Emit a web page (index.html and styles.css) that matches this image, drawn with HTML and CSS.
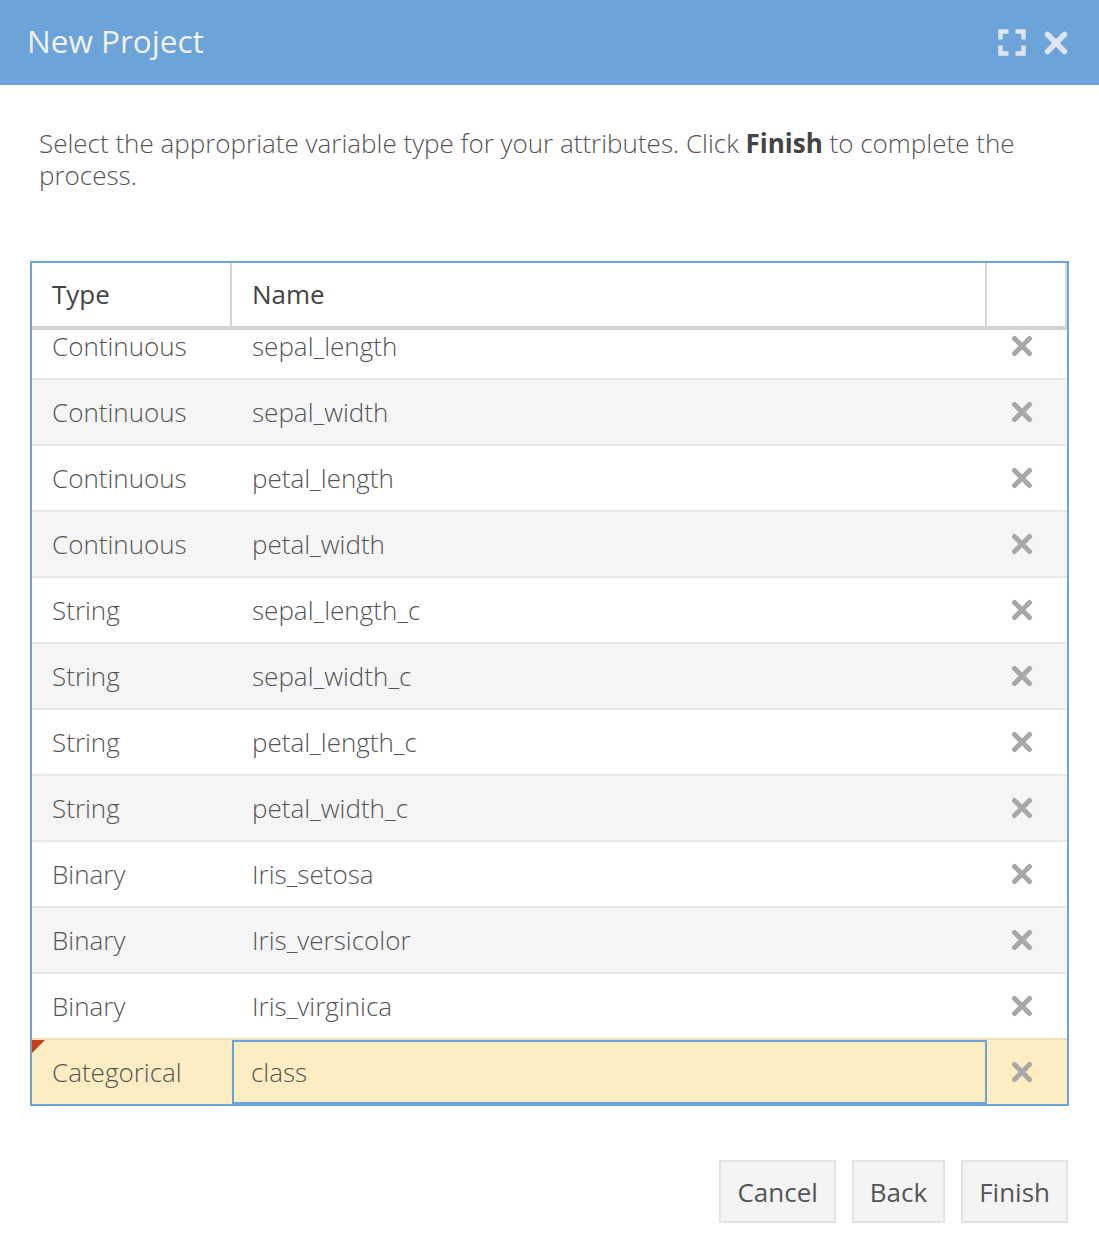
FILE: index.html
```html
<!DOCTYPE html>
<html lang="en">
<head>
<meta charset="utf-8">
<title>New Project</title>
<link rel="stylesheet" href="styles.css">
</head>
<body>
<div class="dialog">
  <header class="titlebar">
    <h1 class="title">New Project</h1>
    <div class="tools">
      <svg class="ico-expand" width="28" height="27" viewBox="0 0 28 27">
        <path d="M2.5 10.5V2.5H10.5M17.5 2.5H25.5V10.5M25.5 16.5V24.5H17.5M10.5 24.5H2.5V16.5" fill="none" stroke="#dce6f0" stroke-width="4.5"/>
      </svg>
      <svg class="ico-close" width="24" height="24" viewBox="0 0 24 24">
        <path d="M3.5 3.5L20.5 20.5M20.5 3.5L3.5 20.5" fill="none" stroke="#dce6f0" stroke-width="5.5" stroke-linecap="round"/>
      </svg>
    </div>
  </header>
  <main class="content">
    <p class="intro">Select the appropriate variable type for your attributes. Click <strong>Finish</strong> to complete the process.</p>
    <div class="grid">
      <div class="grid-head">
        <div class="hcell c-type">Type</div>
        <div class="hcell c-name">Name</div>
        <div class="hcell c-act"></div>
      </div>
      <div class="grid-body">
        <div class="rows">
          <div class="row"><div class="cell c-type">Continuous</div><div class="cell c-name">sepal_length</div><div class="cell c-act"><svg class="x" width="22" height="22" viewBox="0 0 22 22"><path d="M3.5 3.5L18.5 18.5M18.5 3.5L3.5 18.5"/></svg></div></div>
          <div class="row alt"><div class="cell c-type">Continuous</div><div class="cell c-name">sepal_width</div><div class="cell c-act"><svg class="x" width="22" height="22" viewBox="0 0 22 22"><path d="M3.5 3.5L18.5 18.5M18.5 3.5L3.5 18.5"/></svg></div></div>
          <div class="row"><div class="cell c-type">Continuous</div><div class="cell c-name">petal_length</div><div class="cell c-act"><svg class="x" width="22" height="22" viewBox="0 0 22 22"><path d="M3.5 3.5L18.5 18.5M18.5 3.5L3.5 18.5"/></svg></div></div>
          <div class="row alt"><div class="cell c-type">Continuous</div><div class="cell c-name">petal_width</div><div class="cell c-act"><svg class="x" width="22" height="22" viewBox="0 0 22 22"><path d="M3.5 3.5L18.5 18.5M18.5 3.5L3.5 18.5"/></svg></div></div>
          <div class="row"><div class="cell c-type">String</div><div class="cell c-name">sepal_length_c</div><div class="cell c-act"><svg class="x" width="22" height="22" viewBox="0 0 22 22"><path d="M3.5 3.5L18.5 18.5M18.5 3.5L3.5 18.5"/></svg></div></div>
          <div class="row alt"><div class="cell c-type">String</div><div class="cell c-name">sepal_width_c</div><div class="cell c-act"><svg class="x" width="22" height="22" viewBox="0 0 22 22"><path d="M3.5 3.5L18.5 18.5M18.5 3.5L3.5 18.5"/></svg></div></div>
          <div class="row"><div class="cell c-type">String</div><div class="cell c-name">petal_length_c</div><div class="cell c-act"><svg class="x" width="22" height="22" viewBox="0 0 22 22"><path d="M3.5 3.5L18.5 18.5M18.5 3.5L3.5 18.5"/></svg></div></div>
          <div class="row alt"><div class="cell c-type">String</div><div class="cell c-name">petal_width_c</div><div class="cell c-act"><svg class="x" width="22" height="22" viewBox="0 0 22 22"><path d="M3.5 3.5L18.5 18.5M18.5 3.5L3.5 18.5"/></svg></div></div>
          <div class="row"><div class="cell c-type">Binary</div><div class="cell c-name">Iris_setosa</div><div class="cell c-act"><svg class="x" width="22" height="22" viewBox="0 0 22 22"><path d="M3.5 3.5L18.5 18.5M18.5 3.5L3.5 18.5"/></svg></div></div>
          <div class="row alt"><div class="cell c-type">Binary</div><div class="cell c-name">Iris_versicolor</div><div class="cell c-act"><svg class="x" width="22" height="22" viewBox="0 0 22 22"><path d="M3.5 3.5L18.5 18.5M18.5 3.5L3.5 18.5"/></svg></div></div>
          <div class="row"><div class="cell c-type">Binary</div><div class="cell c-name">Iris_virginica</div><div class="cell c-act"><svg class="x" width="22" height="22" viewBox="0 0 22 22"><path d="M3.5 3.5L18.5 18.5M18.5 3.5L3.5 18.5"/></svg></div></div>
          <div class="row selected"><span class="flag"></span><div class="cell c-type">Categorical</div><div class="cell c-name active">class</div><div class="cell c-act"><svg class="x" width="22" height="22" viewBox="0 0 22 22"><path d="M3.5 3.5L18.5 18.5M18.5 3.5L3.5 18.5"/></svg></div></div>
        </div>
      </div>
    </div>
    <div class="actions">
      <button class="btn">Cancel</button>
      <button class="btn">Back</button>
      <button class="btn">Finish</button>
    </div>
  </main>
</div>
</body>
</html>
```

FILE: styles.css
```css
* { box-sizing: border-box; }
html, body { margin: 0; padding: 0; background: #fff; }
body {
  font-family: "Open Sans", "Liberation Sans", sans-serif;
  color: #555;
}
.dialog { width: 1099px; }

.titlebar {
  height: 85px;
  background: #6ca3d8;
  display: flex;
  align-items: center;
  justify-content: space-between;
  padding: 0 31px 4px 27px;
}
.title {
  margin: 0;
  font-size: 31.5px;
  font-weight: 400;
  color: #f2f2f2;
}
.tools { display: flex; align-items: center; gap: 18px; margin-top: 4px; }
.ico-expand { display: block; }
.ico-close { display: block; }

.content { padding: 42px 30px 24px; }
.intro {
  margin: 0 0 70px;
  padding: 0 9px;
  font-size: 26px;
  line-height: 32px;
  font-weight: 300;
  color: #555;
}
.intro strong { font-weight: 700; color: #444; }

.grid {
  border: 2px solid #6ca3d8;
  width: 1039px;
}
.grid-head {
  display: flex;
  height: 67px;
  border-bottom: 4px solid #d2d2d2;
}
.hcell {
  display: flex;
  align-items: center;
  padding-left: 20px;
  padding-bottom: 1px;
  font-size: 26px;
  font-weight: 400;
  color: #444;
  border-right: 2px solid #d6d6d6;
}
.c-type { width: 200px; flex: none; }
.c-name { width: 755px; flex: none; }
.c-act { width: 80px; flex: none; }

.grid-body { height: 774px; overflow: hidden; }
.rows { margin-top: -18px; }
.row {
  position: relative;
  display: flex;
  height: 66px;
  border-top: 2px solid #e8e8e8;
  background: #fff;
}
.row.alt { background: #f5f5f5; }
.row.selected { background: #fcedc2; border-top-color: #efdfb3; }
.cell {
  display: flex;
  align-items: center;
  padding-left: 20px;
  font-size: 26px;
  font-weight: 300;
  color: #555;
}
.cell.c-act { padding-left: 24px; }
.cell.active { box-shadow: inset 0 0 0 2px #6ca3d8; padding-left: 19px; }
.x { display: block; }
.x path { fill: none; stroke: #a8a8a8; stroke-width: 5; stroke-linecap: round; }
.flag {
  position: absolute;
  left: 0;
  top: 0;
  width: 0;
  height: 0;
  border-top: 13px solid #c4401c;
  border-right: 13px solid transparent;
}

.actions {
  display: flex;
  justify-content: flex-end;
  gap: 16px;
  margin-top: 54px;
  padding-right: 1px;
}
.btn {
  height: 63px;
  padding: 0 16px;
  background: #f4f4f4;
  border: 2px solid #e2e2e2;
  border-radius: 0;
  font-family: "Open Sans", "Liberation Sans", sans-serif;
  font-size: 26px;
  font-weight: 400;
  color: #555;
}
```
